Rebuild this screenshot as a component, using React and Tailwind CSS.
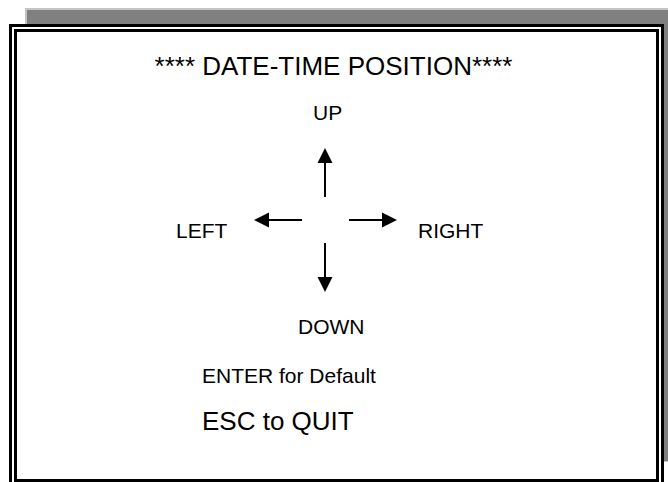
import React from "react";

const font = { fontFamily: '"Liberation Sans", Arial, sans-serif' };

const Arrows = () => (
  <svg width="144" height="145" viewBox="0 0 144 145" className="block shrink-0">
    <g stroke="#000" strokeWidth="2" fill="none">
      <line x1="71" y1="15" x2="71" y2="49" />
      <line x1="15" y1="72" x2="48" y2="72" />
      <line x1="95" y1="72" x2="128" y2="72" />
      <line x1="71" y1="95" x2="71" y2="129" />
    </g>
    <g fill="#000">
      <polygon points="71,0 63.5,15 78.5,15" />
      <polygon points="0,72 15,64.5 15,79.5" />
      <polygon points="143,72 128,64.5 128,79.5" />
      <polygon points="71,144 63.5,129 78.5,129" />
    </g>
  </svg>
);

export default function App() {
  return (
    <div className="relative w-[668px] h-[482px] overflow-hidden bg-white text-black" style={font}>
      {/* window behind */}
      <div className="absolute left-[25px] top-[8px] w-[660px] h-[454px] bg-[#808080] border-t-2 border-l-2 border-b border-[#c4c4c4]" />

      <div className="relative ml-[9px] mt-[24px] w-[655px] h-[470px] border-[3px] border-black bg-white p-[2px]">
        <div className="w-full h-[453px] border-[3px] border-black bg-white flex flex-col">
          <div className="mt-[19px] pr-[6px] text-center text-[26px] leading-[30px]">
            **** DATE-TIME POSITION****
          </div>

          <div className="mt-[20px] ml-[296px] text-[21px] leading-[24px]">UP</div>

          <div className="mt-[23px] flex items-start">
            <div className="ml-[159px] w-[78px] mt-[71px] text-[21px] leading-[24px]">LEFT</div>
            <Arrows />
            <div className="ml-[20px] mt-[71px] text-[21px] leading-[24px]">RIGHT</div>
          </div>

          <div className="mt-[22px] ml-[281px] text-[21px] leading-[24px]">DOWN</div>

          <div className="mt-[25px] ml-[185px] text-[21px] leading-[24px]">ENTER for Default</div>

          <div className="mt-[18px] ml-[185px] text-[26px] leading-[30px]">ESC to QUIT</div>
        </div>
      </div>
    </div>
  );
}
